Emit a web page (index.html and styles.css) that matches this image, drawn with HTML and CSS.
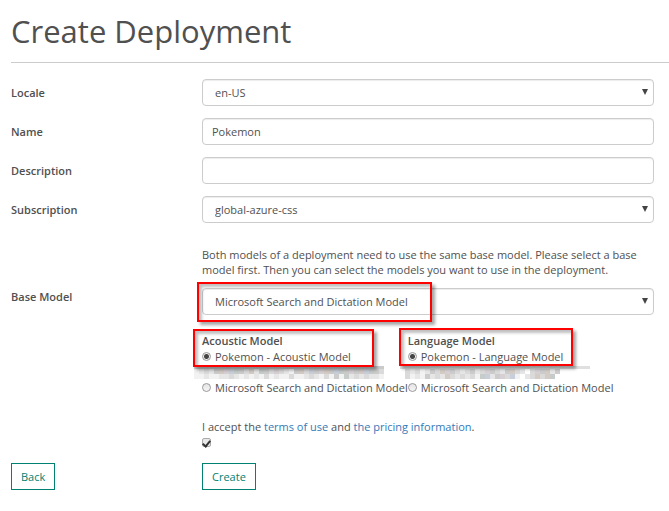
FILE: index.html
```html
<!DOCTYPE html>
<html lang="en">
<head>
<meta charset="utf-8">
<title>Create Deployment</title>
<link rel="stylesheet" href="styles.css">
</head>
<body>
<main class="page">
  <h1 class="title">Create Deployment</h1>
  <form class="form">
    <div class="row">
      <label class="name" for="locale">Locale</label>
      <div class="select-wrap"><select class="control select" id="locale"><option>en-US</option></select></div>
    </div>
    <div class="row">
      <label class="name" for="name">Name</label>
      <input class="control" id="name" type="text" value="Pokemon">
    </div>
    <div class="row">
      <label class="name" for="description">Description</label>
      <input class="control" id="description" type="text">
    </div>
    <div class="row">
      <label class="name" for="subscription">Subscription</label>
      <div class="select-wrap"><select class="control select" id="subscription"><option>global-azure-css</option></select></div>
    </div>
    <p class="help indent">Both models of a deployment need to use the same base model. Please select a base model first. Then you can select the models you want to use in the deployment.</p>
    <div class="row row-base">
      <label class="name" for="base">Base Model</label>
      <div class="select-wrap"><select class="control select" id="base"><option>Microsoft Search and Dictation Model</option></select><span class="mark mark-base"></span></div>
    </div>
    <div class="models indent">
      <fieldset class="group">
        <legend class="legend">Acoustic Model</legend>
        <label class="option"><input class="radio" type="radio" name="acoustic" checked>Pokemon - Acoustic Model</label>
        <svg class="mosaic" data-shade="#cacaca" data-top="abcbdefghdcebhdcfcbadecgdfedghdfdeghdc" data-bottom="aabaabbcbababacabaacaabcbacadahbcbcbba" width="190" height="15" aria-hidden="true"></svg>
        <label class="option"><input class="radio" type="radio" name="acoustic">Microsoft Search and Dictation Model</label>
        <span class="mark mark-acoustic"></span>
      </fieldset>
      <fieldset class="group">
        <legend class="legend">Language Model</legend>
        <label class="option"><input class="radio" type="radio" name="language" checked>Pokemon - Language Model</label>
        <svg class="mosaic" data-shade="#e0e0e0" data-top=" cbcabdcefdcbcdbcfdcbdecb cfdebd" data-bottom=" cabadbcbecbcbcahgbdfcga bceceh" width="190" height="15" aria-hidden="true"></svg>
        <label class="option"><input class="radio" type="radio" name="language">Microsoft Search and Dictation Model</label>
        <span class="mark mark-language"></span>
      </fieldset>
    </div>
    <div class="accept indent">
      <label for="accept">I accept the <a href="#">terms of use</a> and <a href="#">the pricing information</a>.</label>
      <input class="check" id="accept" type="checkbox" checked>
    </div>
    <div class="row actions">
      <div><button class="button" type="button">Back</button></div>
      <div><button class="button" type="submit">Create</button></div>
    </div>
  </form>
</main>
<script src="mosaic.js"></script>
</body>
</html>
```
FILE: styles.css
```css
* { box-sizing: border-box; }
body { margin: 0; background: #fff; color: #505050; font: 11px/15px "Open Sans", "Noto Sans", sans-serif; }
.page { padding: 8px 0 0 11px; }
.title { margin: 0; padding-bottom: 8px; border-bottom: 1px solid #ccc; font-size: 31px; line-height: 46px; font-weight: 500; }
.form { padding: 16px 15px 0 0; }
.row { display: grid; grid-template-columns: 191px minmax(0, 1fr); margin-bottom: 12px; }
.name { font-weight: 600; padding-top: 6px; }
.row-base .name { padding-top: 1px; }
.indent { margin-left: 191px; }
.control { display: block; width: 100%; height: 27px; margin: 0; padding: 0 9px; border: 1px solid #ccc; border-radius: 4px; background: #fff; box-shadow: inset 0 1px 1px rgba(0,0,0,.075); color: #505050; font: inherit; }
.select { appearance: none; padding-left: 12px; }
.select-wrap { position: relative; }
.select-wrap::after { content: ""; position: absolute; right: 6px; top: 10px; border: 3px solid transparent; border-top: 6px solid #444; border-bottom: 0; }
.help { margin-top: 24px; margin-bottom: 11px; }
.models { display: grid; grid-template-columns: max-content max-content; margin-top: 18px; }
.group { position: relative; min-width: 0; margin: 0; padding: 0; border: 0; white-space: nowrap; }
.legend { padding: 0; font-weight: 600; line-height: 15px; }
.option { display: flex; align-items: center; gap: 4px; height: 16px; }
.radio { appearance: none; flex: none; width: 9px; height: 9px; margin: 0; border: 1px solid #999; border-radius: 50%; background: linear-gradient(#e4e4e4, #f6f6f6); }
.radio:checked { background: radial-gradient(circle, #444 2px, #eee 3px); }
.mosaic { display: block; margin-left: -8px; margin-right: -20px; width: 190px; }
.mark { position: absolute; border: 2px solid #f00; box-shadow: 3px 3px 3px rgba(0,0,0,.35), inset 3px 3px 3px rgba(0,0,0,.25); pointer-events: none; }
.mark-base { left: -5px; top: -6px; width: 235px; height: 40px; }
.mark-acoustic { left: -9px; top: -19px; width: 181px; height: 38px; }
.mark-language { left: -9px; top: -20px; width: 174px; height: 38px; }
.accept { margin-top: 24px; }
.accept a { color: #337ab7; text-decoration: none; }
.check { appearance: none; display: grid; place-items: center; width: 9px; height: 9px; margin: 4px 0 0; border: 1px solid #aaa; border-radius: 2px; background: #e8e8e8; }
.check:checked::after { content: ""; width: 3px; height: 6px; border: solid #333; border-width: 0 2px 2px 0; transform: rotate(40deg); }
.actions { margin-top: 16px; }
.button { height: 27px; padding: 0 9px; border: 1px solid #008272; background: #fff; color: #008272; font: inherit; }
```
FILE: mosaic.js
```js
// Fills each redacted row with 5px blocks; letters index the palette.
const palette = { a: "#f2f2f2", b: "#e6e6e6", c: "#dadada", d: "#cccccc", e: "#d4cbc5", f: "#d6cfd4", g: "#c9cfda", h: "#c5ccca" };
function block(svg, x, y, width, height, fill) {
  const rect = document.createElementNS("http://www.w3.org/2000/svg", "rect");
  Object.entries({ x, y, width, height, fill }).forEach(([key, value]) => rect.setAttribute(key, value));
  svg.append(rect);
}
document.querySelectorAll(".mosaic").forEach((svg) => {
  block(svg, 0, 2, 190, 3, svg.dataset.shade);
  [svg.dataset.top, svg.dataset.bottom].forEach((line, row) => {
    [...line].forEach((letter, i) => {
      if (palette[letter]) block(svg, i * 5, 5 + row * 5, 5, 5, palette[letter]);
    });
  });
});
```
